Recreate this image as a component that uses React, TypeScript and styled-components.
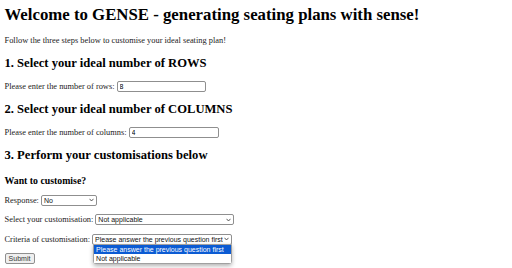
import React from "react";
import styled, { createGlobalStyle } from "styled-components";

const GlobalStyle = createGlobalStyle`
  html, body {
    margin: 0;
    background: #fff;
  }
  body {
    font-family: "Liberation Serif", "Times New Roman", serif;
    font-size: 8.4px;
    color: #000;
  }
`;

const Page = styled.main`
  display: flex;
  flex-direction: column;
  align-items: flex-start;
  padding: 5px 4.5px;
`;

const Title = styled.h1`
  margin: 0;
  font-size: 16.8px;
  line-height: 19px;
  font-weight: bold;
`;

const Intro = styled.p`
  margin: 12px 0 0;
  line-height: 9.7px;
  color: #222;
`;

const Heading = styled.h2`
  margin: 10px 0 0;
  font-size: 12.6px;
  line-height: 14.5px;
  font-weight: bold;
`;

const SubHeading = styled.h3`
  margin: 12.5px 0 0;
  font-size: 9.8px;
  line-height: 11.3px;
  font-weight: bold;
`;

const Field = styled.div<{ $tight?: boolean }>`
  display: flex;
  align-items: center;
  gap: 2px;
  margin-top: ${(p) => (p.$tight ? 8.5 : 10.5)}px;
  height: 11px;
  color: #222;
  white-space: nowrap;
`;

const TextInput = styled.input<{ $w: number }>`
  box-sizing: border-box;
  width: ${(p) => p.$w}px;
  height: 11px;
  margin: 0;
  padding: 0 2px;
  border: 1px solid #8f8f8f;
  border-radius: 2px;
  font-family: "Liberation Sans", Arial, sans-serif;
  font-size: 7px;
  color: #000;
  background: #fff;
  outline: none;
`;

const SelectWrap = styled.span<{ $w: number }>`
  position: relative;
  display: inline-flex;
  width: ${(p) => p.$w}px;
  height: 11px;
`;

const NativeSelect = styled.select`
  appearance: none;
  box-sizing: border-box;
  width: 100%;
  height: 100%;
  margin: 0;
  padding: 0 8px 0 2px;
  border: 1px solid #8f8f8f;
  border-radius: 2px;
  background: #fff;
  font-family: "Liberation Sans", Arial, sans-serif;
  font-size: 7px;
  line-height: 9px;
  color: #111;
  outline: none;
`;

const Chevron = styled.svg`
  position: absolute;
  right: 3px;
  top: 3.5px;
  width: 5px;
  height: 4px;
  pointer-events: none;
`;

const Popup = styled.ul`
  position: absolute;
  left: 1px;
  top: 10px;
  z-index: 2;
  box-sizing: border-box;
  width: 139px;
  margin: 0;
  padding: 0;
  list-style: none;
  background: #fff;
  border: 1px solid #a0a0a0;
  border-radius: 0 0 3px 3px;
  box-shadow: 0 2px 4px rgba(0, 0, 0, 0.3);
  font-family: "Liberation Sans", Arial, sans-serif;
  font-size: 7px;
`;

const Option = styled.li<{ $active?: boolean }>`
  height: 9.3px;
  line-height: 9.3px;
  padding: 0 2px;
  background: ${(p) => (p.$active ? "#0b5bd3" : "#fff")};
  color: ${(p) => (p.$active ? "#fff" : "#111")};
`;

const SubmitButton = styled.button`
  margin-top: 8px;
  box-sizing: border-box;
  width: 30px;
  height: 11px;
  padding: 0;
  border: 1px solid #8f8f8f;
  border-radius: 2px;
  background: #efefef;
  font-family: "Liberation Sans", Arial, sans-serif;
  font-size: 7px;
  line-height: 9px;
  color: #333;
`;

const ChevronIcon = () => (
  <Chevron viewBox="0 0 5 4">
    <path d="M0.5 0.8 L2.5 3 L4.5 0.8" fill="none" stroke="#333" strokeWidth="0.8" />
  </Chevron>
);

type SelectProps = {
  width: number;
  options: string[];
  open?: boolean;
};

const Dropdown = ({ width, options, open }: SelectProps) => (
  <SelectWrap $w={width}>
    <NativeSelect defaultValue={options[0]}>
      {options.map((o) => (
        <option key={o}>{o}</option>
      ))}
    </NativeSelect>
    <ChevronIcon />
    {open && (
      <Popup>
        {options.map((o, i) => (
          <Option key={o} $active={i === 0}>
            {o}
          </Option>
        ))}
      </Popup>
    )}
  </SelectWrap>
);

export default function App() {
  return (
    <>
      <GlobalStyle />
      <Page>
        <Title>Welcome to GENSE - generating seating plans with sense!</Title>
        <Intro>Follow the three steps below to customise your ideal seating plan!</Intro>

        <Heading>1. Select your ideal number of ROWS</Heading>
        <Field>
          Please enter the number of rows:
          <TextInput $w={89} defaultValue="8" />
        </Field>

        <Heading>2. Select your ideal number of COLUMNS</Heading>
        <Field>
          Please enter the number of columns:
          <TextInput $w={90} defaultValue="4" />
        </Field>

        <Heading>3. Perform your customisations below</Heading>
        <SubHeading>Want to customise?</SubHeading>
        <Field $tight>
          Response:
          <Dropdown width={56} options={["No", "Yes"]} />
        </Field>
        <Field $tight>
          Select your customisation:
          <Dropdown width={139} options={["Not applicable"]} />
        </Field>
        <Field $tight>
          Criteria of customisation:
          <Dropdown
            width={140}
            options={["Please answer the previous question first", "Not applicable"]}
            open
          />
        </Field>
        <SubmitButton>Submit</SubmitButton>
      </Page>
    </>
  );
}
